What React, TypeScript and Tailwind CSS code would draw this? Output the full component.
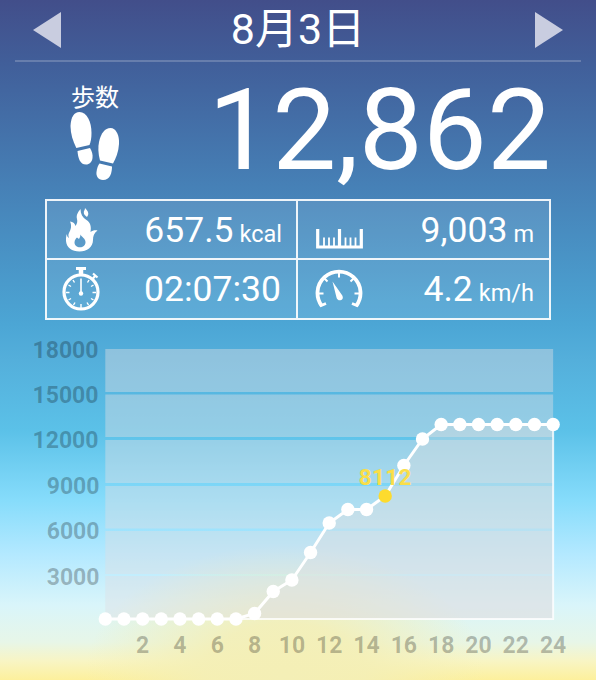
import type { ReactNode } from "react";

const LEFT = 105.3;
const STEP = 18.66;
const BASE = 619;

// height of every hourly point, 0h to 24h
const points = [
    619, 619, 619, 619, 619, 619, 619, 619, 613.5, 591.5, 580, 552.5, 523,
    509.5, 509.5, 496, 465.5, 439, 424.5, 424.5, 424.5, 424.5, 424.5, 424.5, 424.5,
];
const current = 15;

const yLabels = [
    { text: "18000", x: 98.5, y: 357.5 },
    { text: "15000", x: 98.5, y: 402.5 },
    { text: "12000", x: 98.5, y: 448 },
    { text: "9000", x: 99.5, y: 494 },
    { text: "6000", x: 99.5, y: 539 },
    { text: "3000", x: 99.5, y: 585 },
];
const bands = [
    { y: 349, h: 43 },
    { y: 394.5, h: 42.5 },
    { y: 440, h: 43 },
    { y: 486, h: 42.5 },
    { y: 531, h: 43 },
    { y: 576, h: 43 },
];
const xLabels = [2, 4, 6, 8, 10, 12, 14, 16, 18, 20, 22, 24];

function px(i: number) {
    return LEFT + i * STEP;
}

function Feet() {
    return (
        <svg viewBox="0 0 50 69" className="h-[69px] w-[50px]" fill="#fff">
            <path d="M6.300 36C3 29 .5 22 .5 14C1 5 4 0 9.500 0C17 0 21.500 10 21.500 21C21.500 26 20.800 30 19.500 33Z" />
            <path d="M7.500 39L20 36C22 39 23 43 22.500 46C22 50 19.500 52.500 16 52.500C10 52.500 8 46 7.500 39Z" />
            <path d="M30 48.500C28 41 28 35 29 30C31 21 35 16 40.500 16C46 16 49.500 23 49 32C48.500 40 46 46 43 51.500Z" />
            <path d="M29.500 51.500L42 54.500C42 61 40 68 33 68C28 68 26 64 26.500 60C27 56 28 53.500 29.500 51.500Z" />
        </svg>
    );
}

function Flame() {
    return (
        <svg viewBox="0 0 32 44" className="h-[44px] w-[32px]" fill="#fff">
            <path d="M14.500 1C12 4 10 7 11 11C11.500 13.500 11.500 15 9.500 18C8.500 15 7 14 4 13.500C6 18 5 21 3 25C2 27 2.500 28 3 30C1.500 29 1 28 .8 26C0 28 0 31 0 33C.5 39.500 6 43.500 13.500 43.500C21 43.500 27 39 27 32C27 28 28 25 31.500 22.500C29 21.800 26.500 22.500 24.500 24C25.500 19 24.500 14.500 20.500 12C16.500 9.500 14.500 6 14.500 1ZM14.500 26.500C15.500 29 19.800 30.500 19.500 34.500C19.300 37.500 17 39.300 14 39.300C11 39.300 8.500 37.500 8.500 34.500C8.500 32 10 30.500 11 29.500L13 31C14 29.500 14.500 28 14.500 26.500Z" fillRule="evenodd" />
            <path d="M19 0C23 4 23 6 21 9C19.500 7.500 17.500 6.500 17.800 4C18 2.500 19 2 19 0Z" />
        </svg>
    );
}

function Stopwatch() {
    return (
        <svg viewBox="0 0 40 44" className="h-[44px] w-[40px]" fill="none" stroke="#fff">
            <circle cx="19" cy="25" r="17" strokeWidth="3.200" />
            <path d="M14 1.500H24" strokeWidth="3" />
            <path d="M19 2V8" strokeWidth="4.500" />
            <path d="M30.500 12L33.500 8.500M31 6.500L35.500 10.500" strokeWidth="2.200" />
            <path d="M19 11.500V25" strokeWidth="1.600" />
            <circle cx="19" cy="26.500" r="2.200" fill="#fff" stroke="none" />
            <path d="M19 37V41M4 25.500H7.500M30.500 25.500H34M6.500 18L9 19.500M31.500 18L29 19.500M6.500 33L9 31.500M31.500 33L29 31.500M11.500 38L13 35.500M26.500 38L25 35.500M11 13L12.500 15.500M27 13L25.500 15.500" strokeWidth="1.400" />
        </svg>
    );
}

function Ruler() {
    return (
        <svg viewBox="0 0 47 20" className="mt-[18px] h-[20px] w-[47px]" fill="none" stroke="#fff">
            <path d="M1.700 0V18H45.300V0M23.500 0V18" strokeWidth="3.200" />
            <path d="M8 8.500V17M13 8.500V17M18 8.500V17M29.500 8.500V17M34.500 8.500V17M39.500 8.500V17" strokeWidth="1.800" />
        </svg>
    );
}

function Gauge() {
    return (
        <svg viewBox="0 0 48 40" className="h-[40px] w-[48px]" fill="none" stroke="#fff">
            <path d="M6.800 37A21.500 21.500 0 1 1 41.200 37" strokeWidth="3.800" />
            <path d="M5 37L11 34.500M43 37L37 34.500" strokeWidth="2.800" />
            <path d="M24 3V8.500M9 9L12.500 12.500M39 9L35.500 12.500M3 24.500H8.500M45 24.500H39.500" strokeWidth="2" />
            <path d="M17.500 12.500L27.300 26.500C28.500 29 27.500 31 25.500 31.300C23.500 31.600 22 30.500 21.500 28.500Z" fill="#fff" stroke="none" />
        </svg>
    );
}

function Stat({ icon, value, unit, className }: { icon: ReactNode; value: string; unit?: string; className: string }) {
    return (
        <div className={"flex items-center justify-between border-white/90 " + className}>
            <div className="flex w-12 items-center justify-center">{icon}</div>
            <div className="flex items-baseline gap-[6px] whitespace-nowrap pt-[2px] leading-none">
                <span className="text-[35.500px]">{value}</span>
                {unit && <span className="text-[23.500px]">{unit}</span>}
            </div>
        </div>
    );
}

function Chart() {
    const line = points.map((y, i) => `${px(i)},${y}`).join(" ");
    return (
        <svg viewBox="0 320 596 360" className="block h-[360px] w-[596px]">
            {bands.map((b) => (
                <rect key={b.y} x={LEFT} y={b.y} width={STEP * 24} height={b.h} fill="#dedfe4" fillOpacity=".43" />
            ))}
            <polygon points={`${line} ${px(24)},${BASE}`} fill="#e0e0e0" fillOpacity=".38" />
            <path d={`M${px(0)} ${BASE}H${px(24)}V424.500`} fill="none" stroke="#fff" strokeOpacity=".8" strokeWidth="2" />
            <polyline points={line} fill="none" stroke="#fff" strokeWidth="3" />
            {points.map((y, i) => (
                <circle key={i} cx={px(i)} cy={y} r="6.700" fill={i === current ? "#fddb2e" : "#fff"} />
            ))}
            <text x="385.300" y="485" textAnchor="middle" fontSize="22.700" letterSpacing=".3" className="font-bold" fill="#fade48">
                8112
            </text>
            <g fontSize="23" className="font-bold" fill="#000" fillOpacity=".26">
                {yLabels.map((l) => (
                    <text key={l.text} x={l.x} y={l.y} textAnchor="end">{l.text}</text>
                ))}
                {xLabels.map((n) => (
                    <text key={n} x={px(n)} y="653" textAnchor="middle">{n}</text>
                ))}
            </g>
        </svg>
    );
}

export default function App() {
    return (
        <div className="flex h-[680px] w-[596px] flex-col overflow-hidden bg-[radial-gradient(ellipse_200px_130px_at_285px_675px,#f4efb6_0%,#f4efb6e6_40%,#f4efb600_100%),linear-gradient(180deg,#424e8a_0px,#415f9a_65px,#4680b6_185px,#4ca6d5_325px,#54afdb_360px,#5bc1e8_430px,#86dcfb_500px,#b4e9ff_555px,#d9f5fa_605px,#e7f6e8_642px,#f8f5c4_661px,#fdf09c_680px)] font-[Roboto,'Noto_Sans_CJK_JP',sans-serif] text-white">
            <div className="mx-[15px] flex h-[62px] items-center justify-between border-b-2 border-white/20 pl-[18px] pr-[18px]">
                <svg viewBox="0 0 28 36" className="h-9 w-7" fill="#c9cde0"><path d="M28 0V36L0 18Z" /></svg>
                <h1 className="pb-px text-[43px] leading-none">8月3日</h1>
                <svg viewBox="0 0 28 36" className="h-9 w-7" fill="#c9cde0"><path d="M0 0V36L28 18Z" /></svg>
            </div>

            <div className="flex h-[137px] justify-between pl-[70px] pr-[45px]">
                <div className="flex w-[50px] flex-col items-center pt-[24px]">
                    <span className="mb-[2px] whitespace-nowrap text-[24px] leading-6">歩数</span>
                    <Feet />
                </div>
                <div className="pt-[8px] text-[114px] leading-[121px]">12,862</div>
            </div>

            <div className="mx-[45px] grid h-[121px] w-[506px] grid-cols-[251px_251px] grid-rows-[59px_58px] border-2 border-white/90 bg-white/10">
                <Stat className="border-r-2 border-b-2 pl-[11px] pr-[14px]" icon={<Flame />} value="657.5" unit="kcal" />
                <Stat className="border-b-2 pl-[17px] pr-[15px]" icon={<Ruler />} value="9,003" unit="m" />
                <Stat className="border-r-2 pl-[11px] pr-[15px]" icon={<Stopwatch />} value="02:07:30" />
                <Stat className="pl-[17px] pr-[15px]" icon={<Gauge />} value="4.2" unit="km/h" />
            </div>

            <Chart />
        </div>
    );
}
